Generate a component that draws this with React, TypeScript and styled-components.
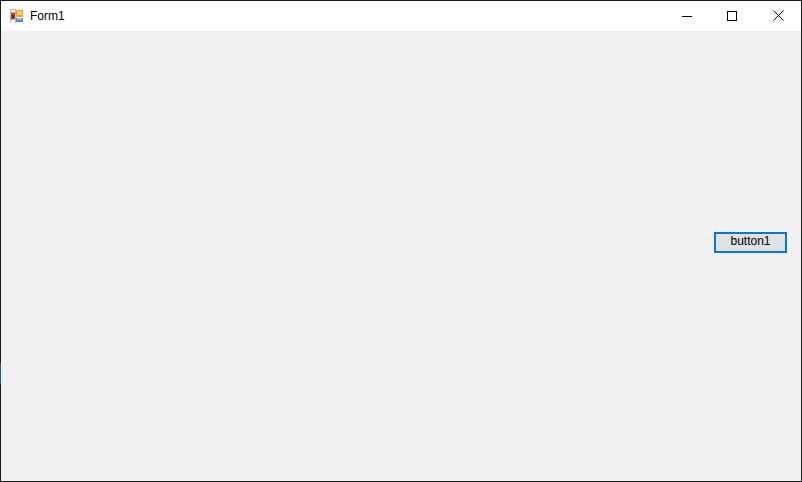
import React from "react";
import styled, { createGlobalStyle } from "styled-components";

const Global = createGlobalStyle`
  html, body { margin: 0; padding: 0; background: #f0f0f0; overflow: hidden; }
  * { box-sizing: border-box; }
`;

const Win = styled.div`
  position: relative;
  width: 802px;
  height: 482px;
  border: 1px solid #1c1c1c;
  background: #f0f0f0;
  display: flex;
  flex-direction: column;
  font-family: "Liberation Sans", Arial, sans-serif;
  color: #000;
`;

const TitleBar = styled.div`
  height: 30px;
  background: #fff;
  display: flex;
  align-items: center;
  padding-left: 9px;
  flex: none;
`;

const Caption = styled.span`
  margin-left: 6px;
  font-size: 12px;
  line-height: 16px;
`;

const Controls = styled.div`
  margin-left: auto;
  display: flex;
  height: 100%;
`;

const Control = styled.div<{ $nudge?: number }>`
  width: 46px;
  height: 29px;
  display: flex;
  align-items: center;
  justify-content: center;
  padding-left: ${(p) => p.$nudge ?? 0}px;
`;

const Client = styled.div`
  flex: 1;
  display: flex;
  justify-content: flex-end;
  align-items: flex-start;
  padding: 201px 14px 0 0;
`;

const Button = styled.button`
  width: 73px;
  height: 21px;
  padding: 0 0 2px;
  border: 2px solid #0078d7;
  border-radius: 0;
  background: #e1e1e1;
  font-family: "Liberation Sans", Arial, sans-serif;
  font-size: 12px;
  line-height: 15px;
  color: #000;
`;

const EdgeMark = styled.div`
  position: absolute;
  left: -1px;
  top: 362px;
  width: 1px;
  height: 21px;
  background: #0f5f8f;
`;

function AppIcon() {
  return (
    <svg width="14" height="14" viewBox="0 0 14 14" shapeRendering="crispEdges">
      <rect x="0" y="0" width="14" height="14" fill="#f6f6f6" />
      <path d="M0.5 13.5V0.5H5.5M0.5 3.5H5.5M0.5 10.5H5.5M5.5 0.5V13.5" stroke="#b8b8b8" fill="none" />
      <rect x="1" y="4" width="4" height="6" fill="#c9352b" />
      <rect x="2" y="6" width="2" height="3" fill="#7d1d1d" />
      <rect x="6" y="1" width="7" height="7" fill="#e6a51f" />
      <rect x="7" y="2" width="5" height="4" fill="#f6cf63" />
      <rect x="6" y="9" width="7" height="4" fill="#4f87dc" />
      <rect x="7" y="9" width="5" height="2" fill="#93bbf0" />
    </svg>
  );
}

export default function App() {
  return (
    <>
      <Global />
      <Win>
        <TitleBar>
          <AppIcon />
          <Caption>Form1</Caption>
          <Controls>
            <Control $nudge={2}>
              <svg width="10" height="10" viewBox="0 0 10 10" shapeRendering="crispEdges">
                <rect x="0" y="5" width="10" height="1" fill="#000" />
              </svg>
            </Control>
            <Control>
              <svg width="10" height="10" viewBox="0 0 10 10" shapeRendering="crispEdges">
                <rect x="0.5" y="0.5" width="9" height="9" fill="none" stroke="#000" />
              </svg>
            </Control>
            <Control>
              <svg width="11" height="11" viewBox="0 0 11 11">
                <path d="M0.5 0.5L10.5 10.5M10.5 0.5L0.5 10.5" stroke="#000" strokeWidth="1" fill="none" />
              </svg>
            </Control>
          </Controls>
        </TitleBar>
        <Client>
          <Button>button1</Button>
        </Client>
        <EdgeMark />
      </Win>
    </>
  );
}
